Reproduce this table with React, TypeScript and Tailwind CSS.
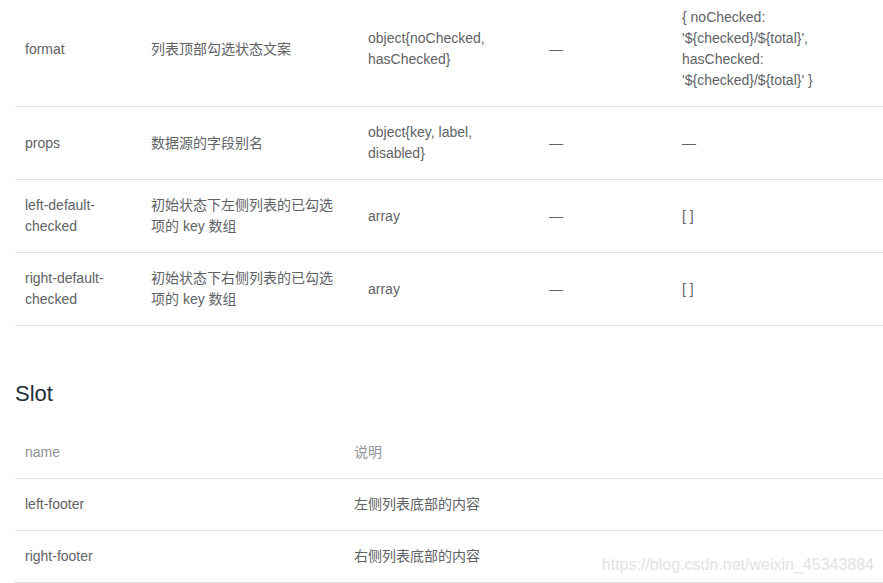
import React from 'react';

type Attr = {
  name: string;
  desc: string;
  type: string;
  options: string;
  def: string[];
};

const attrs: Attr[] = [
  {
    name: 'format',
    desc: '列表顶部勾选状态文案',
    type: 'object{noChecked, hasChecked}',
    options: '—',
    def: ['{ noChecked:', "'${checked}/${total}',", 'hasChecked:', "'${checked}/${total}' }"],
  },
  {
    name: 'props',
    desc: '数据源的字段别名',
    type: 'object{key, label, disabled}',
    options: '—',
    def: ['—'],
  },
  {
    name: 'left-default-checked',
    desc: '初始状态下左侧列表的已勾选项的 key 数组',
    type: 'array',
    options: '—',
    def: ['[ ]'],
  },
  {
    name: 'right-default-checked',
    desc: '初始状态下右侧列表的已勾选项的 key 数组',
    type: 'array',
    options: '—',
    def: ['[ ]'],
  },
];

const slots = [
  { name: 'left-footer', desc: '左侧列表底部的内容' },
  { name: 'right-footer', desc: '右侧列表底部的内容' },
];

const cell = 'px-[10px] py-[15px] align-middle border-b border-[#dcdfe6] leading-[21px]';

const App: React.FC = () => {
  return (
    <div
      className="relative w-[883px] h-[583px] overflow-hidden bg-white text-[14px] text-[#606266]"
      style={{ fontFamily: '"Liberation Sans", Arial, "Noto Sans CJK SC", sans-serif' }}
    >
      <div className="pl-[15px] -mt-[8px]">
        {/* Attributes */}
        <table className="table-fixed border-collapse w-[900px] text-left">
          <colgroup>
            <col className="w-[126px]" />
            <col className="w-[217px]" />
            <col className="w-[181px]" />
            <col className="w-[133px]" />
            <col />
          </colgroup>
          <tbody>
            {attrs.map((a) => (
              <tr key={a.name}>
                <td className={cell}>{a.name}</td>
                <td className={cell}>
                  <div className="w-[190px]">{a.desc}</div>
                </td>
                <td className={cell}>{a.type}</td>
                <td className={cell}>{a.options}</td>
                <td className={cell}>
                  <div className="w-[191px]">
                    {a.def.map((line, i) => (
                      <div key={i}>{line}</div>
                    ))}
                  </div>
                </td>
              </tr>
            ))}
          </tbody>
        </table>

        {/* Slot */}
        <h3 className="mt-[56px] mb-[21px] text-[22px] leading-[24px] font-normal text-[#1f2f3d]">Slot</h3>
        <table className="table-fixed border-collapse w-[900px] text-left">
          <colgroup>
            <col className="w-[329px]" />
            <col />
          </colgroup>
          <thead>
            <tr>
              <th className={`${cell} font-normal text-[#909399]`}>name</th>
              <th className={`${cell} font-normal text-[#909399]`}>说明</th>
            </tr>
          </thead>
          <tbody>
            {slots.map((s) => (
              <tr key={s.name}>
                <td className={cell}>{s.name}</td>
                <td className={cell}>{s.desc}</td>
              </tr>
            ))}
          </tbody>
        </table>
      </div>

      {/* watermark */}
      <div className="absolute right-[9px] top-[553px] text-[16px] leading-[24px] text-[#e2e2e2]">
        https://blog.csdn.net/weixin_45343884
      </div>
    </div>
  );
};

export default App;
